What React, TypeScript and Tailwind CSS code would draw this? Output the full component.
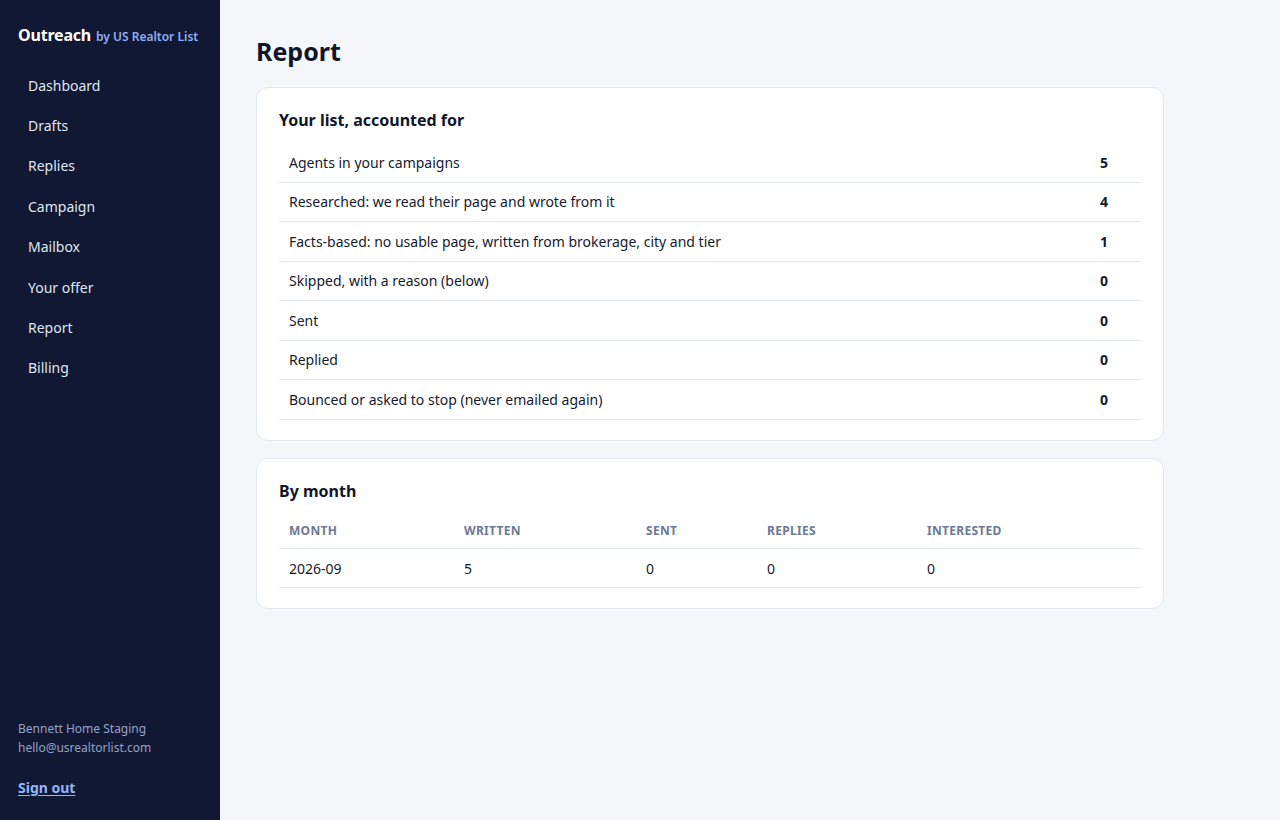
const navItems = ["Dashboard", "Drafts", "Replies", "Campaign", "Mailbox", "Your offer", "Report", "Billing"];

const tally = [
  { label: "Agents in your campaigns", value: 5 },
  { label: "Researched: we read their page and wrote from it", value: 4 },
  { label: "Facts-based: no usable page, written from brokerage, city and tier", value: 1 },
  { label: "Skipped, with a reason (below)", value: 0 },
  { label: "Sent", value: 0 },
  { label: "Replied", value: 0 },
  { label: "Bounced or asked to stop (never emailed again)", value: 0 },
];

const months = [{ month: "2026-09", written: 5, sent: 0, replies: 0, interested: 0 }];

const Sidebar = () => (
  <aside className="flex w-[220px] shrink-0 flex-col bg-[#111833] px-[18px] pt-[23px] pb-[22px]">
    <div className="flex items-baseline gap-[5px] whitespace-nowrap">
      <span className="text-[16px] font-bold tracking-[-0.2px] text-white">Outreach</span>
      <span className="text-[12px] font-semibold text-[#8fb0f7]">by US Realtor List</span>
    </div>
    <nav className="mt-[18px] flex flex-col">
      {navItems.map((item) => (
        <a key={item} href="#" className="flex h-[40.4px] items-center px-[10px] text-[14px] text-[#dfe6f2]">
          {item}
        </a>
      ))}
    </nav>
    <div className="mt-auto">
      <div className="text-[12px] leading-[19px] text-[#94a3c4]">Bennett Home Staging</div>
      <div className="text-[12px] leading-[19px] text-[#94a3c4]">hello@usrealtorlist.com</div>
      <a href="#" className="mt-[20px] block text-[14px] font-bold text-[#93b6f8] underline underline-offset-2">
        Sign out
      </a>
    </div>
  </aside>
);

const Card = ({ title, children }: { title: string; children: React.ReactNode }) => (
  <section className="rounded-[12px] border border-[#e3e7ef] bg-white px-[22px] pt-[20px] pb-[20px]">
    <h2 className="text-[16px] font-bold text-[#0f1629]">{title}</h2>
    {children}
  </section>
);

export default function App() {
  return (
    <div
      className="flex min-h-[820px] bg-[#f5f6fa] text-[#141a2e]"
      style={{ fontFamily: '"Noto Sans", "Open Sans", sans-serif' }}
    >
      <Sidebar />
      <main className="flex-1 pl-[36px] pr-[116px] pt-[33px]">
        <h1 className="text-[25px] font-bold leading-[36px] text-[#0f1629]">Report</h1>
        <div className="mt-[18px] flex flex-col gap-[17px]">
          <Card title="Your list, accounted for">
            <div className="mt-[11px]">
              {tally.map((row) => (
                <div key={row.label} className="flex h-[39.5px] items-center justify-between border-b border-[#e3e7ef] pl-[10px] pr-[33px] text-[14px]">
                  <span>{row.label}</span>
                  <span className="font-bold">{row.value}</span>
                </div>
              ))}
            </div>
          </Card>
          <Card title="By month">
            <table className="mt-[12px] w-full text-left text-[14px]">
              <thead>
                <tr className="border-b border-[#e3e7ef] text-[12px] font-bold uppercase tracking-[0.3px] text-[#6b7896]">
                  <th className="h-[34px] w-[185px] pl-[10px] font-bold">Month</th>
                  <th className="w-[182px] font-bold">Written</th>
                  <th className="w-[121px] font-bold">Sent</th>
                  <th className="w-[160px] font-bold">Replies</th>
                  <th className="font-bold">Interested</th>
                </tr>
              </thead>
              <tbody>
                {months.map((m) => (
                  <tr key={m.month} className="border-b border-[#e3e7ef]">
                    <td className="h-[39px] pl-[10px]">{m.month}</td>
                    <td>{m.written}</td>
                    <td>{m.sent}</td>
                    <td>{m.replies}</td>
                    <td>{m.interested}</td>
                  </tr>
                ))}
              </tbody>
            </table>
          </Card>
        </div>
      </main>
    </div>
  );
}
